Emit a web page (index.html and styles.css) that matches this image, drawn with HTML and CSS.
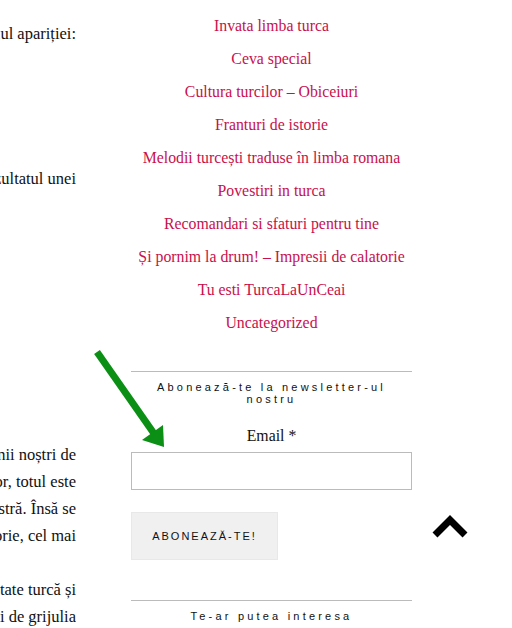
FILE: index.html
```html
<!DOCTYPE html>
<html lang="ro">
<head>
    <meta charset="UTF-8">
    <meta name="viewport" content="width=device-width, initial-scale=1.0">
    <title>TurcaLaUnCeai</title>
    <link rel="stylesheet" href="styles.css">
</head>
<body>

    <div class="layout">
        <!-- coloana de articol (taiata la stanga) -->
        <div class="article">
            <div class="line first"><span>Turcia a fost cunoscută încă din secolul apariției:</span></div>
            <div class="line second"><span>Ceea ce vedem astăzi este, de fapt, rezultatul unei</span></div>
            <div class="line third"><span>Mulți dintre cititorii și prietenii noștri de</span></div>
            <div class="line"><span>pentru un vizitator, totul este</span></div>
            <div class="line"><span>o cultură diferită de a noastră. Însă se</span></div>
            <div class="line"><span>are în spate o lungă istorie, cel mai</span></div>
            <div class="line gap"><span>Bucătăria tradițională, ospitalitate turcă și</span></div>
            <div class="line"><span>oamenii sunt cunoscuți de grijulia</span></div>
        </div>

        <!-- bara laterala -->
        <aside class="sidebar">
            <ul class="categories">
                <li><a href="#">Invata limba turca</a></li>
                <li><a href="#">Ceva special</a></li>
                <li><a href="#">Cultura turcilor – Obiceiuri</a></li>
                <li><a href="#">Franturi de istorie</a></li>
                <li><a href="#">Melodii turcești traduse în limba romana</a></li>
                <li><a href="#">Povestiri in turca</a></li>
                <li><a href="#">Recomandari si sfaturi pentru tine</a></li>
                <li><a href="#">Și pornim la drum! – Impresii de calatorie</a></li>
                <li><a href="#">Tu esti TurcaLaUnCeai</a></li>
                <li><a href="#">Uncategorized</a></li>
            </ul>

            <div class="widget newsletter">
                <h3 class="widget-title">Abonează-te la newsletter-ul nostru</h3>
                <form>
                    <label for="email">Email *</label>
                    <input type="email" id="email">
                    <button type="button">Abonează-te!</button>
                </form>
            </div>

            <div class="widget related">
                <h3 class="widget-title">Te-ar putea interesa</h3>
            </div>
        </aside>
    </div>

    <!-- sageata verde -->
    <svg class="arrow" width="80" height="110" viewBox="0 0 80 110">
        <line x1="4" y1="5" x2="62" y2="88" stroke="#0b8f14" stroke-width="7"/>
        <polygon points="71,100 49,93 70,78" fill="#0b8f14"/>
    </svg>

    <!-- inapoi sus -->
    <a href="#" class="to-top">
        <svg width="40" height="28" viewBox="0 0 40 28">
            <polyline points="4,23 19,8 34,23" fill="none" stroke="#000" stroke-width="7"/>
        </svg>
    </a>

</body>
</html>
```

FILE: styles.css
```css
body { margin: 0; background: #fff; font-family: "Liberation Serif", "DejaVu Serif", serif; color: #111; overflow: hidden; }
.layout { display: flex; gap: 55px; }

/* articol */
.article { width: 76px; font-size: 16.5px; }
.line { display: flex; justify-content: flex-end; overflow: hidden; white-space: nowrap; height: 27px; line-height: 27px; }
.line.first { margin-top: 20px; }
.line.second { margin-top: 118px; }
.line.third { margin-top: 249px; }
.line.gap { margin-top: 27px; }

/* bara laterala */
.sidebar { width: 281px; text-align: center; }
.categories { list-style-type: none; padding: 0; margin: 9px 0 0; }
.categories li { line-height: 33px; font-size: 15.8px; }
.categories a { color: #c8104c; text-decoration: none; }

.widget { border-top: 1px solid #bbb; }
.newsletter { margin-top: 32px; padding-top: 9px; }
.widget-title { margin: 0; font-family: "Liberation Sans", Arial, sans-serif; font-size: 11px; font-weight: normal; letter-spacing: 3.2px; line-height: 12px; padding: 0 20px; }
.newsletter form { display: flex; flex-direction: column; align-items: center; margin-top: 21px; }
label { font-size: 15.8px; line-height: 20px; }
input { box-sizing: border-box; width: 100%; height: 38px; margin-top: 6px; border: 1px solid #bbb; }
button { align-self: flex-start; margin-top: 22px; width: 147px; height: 48px; border: 1px solid #e8e8e8; background-color: #f0f0f0; font-family: "Liberation Sans", Arial, sans-serif; font-size: 11px; letter-spacing: 2px; text-transform: uppercase; color: #111; cursor: pointer; }

.related { margin-top: 40px; padding-top: 9px; }

/* sageata si butonul sus */
.arrow { position: absolute; left: 93px; top: 347px; }
.to-top { position: fixed; left: 431px; top: 512px; }
```
